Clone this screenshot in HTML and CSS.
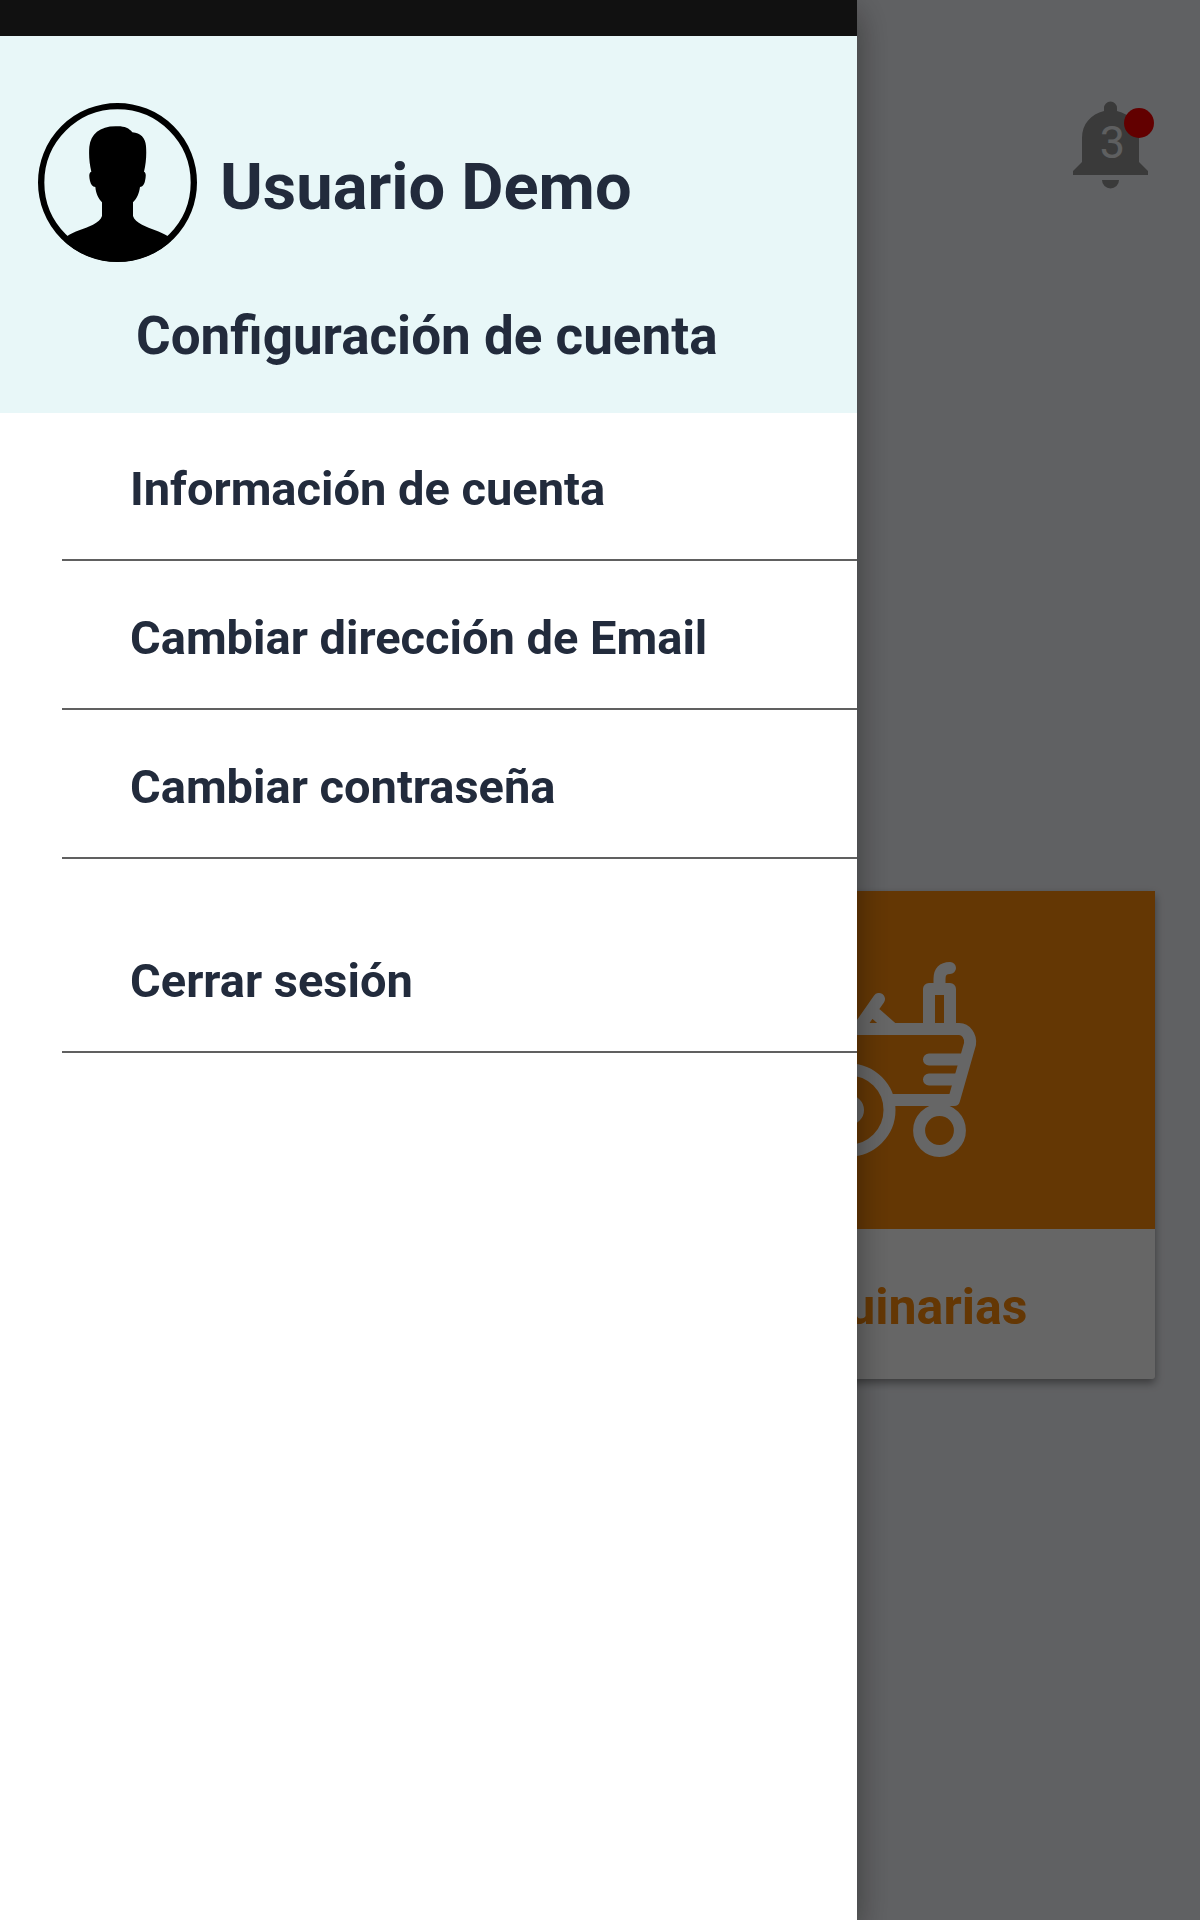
FILE: index.html
```html
<!DOCTYPE html>
<html lang="es">
<head>
<meta charset="utf-8">
<meta name="viewport" content="width=device-width, initial-scale=1">
<title>Configuración de cuenta</title>
<link rel="stylesheet" href="styles.css">
</head>
<body>
<div class="page">
  <header class="topbar">
    <button class="bell" type="button" aria-label="Notificaciones">
      <svg class="bell-icon" viewBox="0 0 75 88" aria-hidden="true">
        <path d="M31 10V7a6.500 6.500 0 0 1 13 0v3C57 13 66 23 66 37V61L75 70V74H0V70L9 61V37C9 23 18 13 31 10Z"/>
        <path d="M29 79H46A8.500 8.500 0 0 1 29 79Z"/>
      </svg>
      <span class="bell-count">3</span>
      <span class="bell-dot"></span>
    </button>
  </header>
  <main class="tiles">
    <a class="tile" href="#maquinarias">
      <span class="tile-art">
        <svg class="tractor" viewBox="790 962 196 196" aria-hidden="true">
          <circle cx="849" cy="1110" r="40.500"/>
          <circle cx="849" cy="1110" r="9"/>
          <circle cx="939.500" cy="1130.500" r="20.400"/>
          <path d="M825 1029H959A11 13 0 0 1 970 1044L954 1100H893"/>
          <path d="M929 1059.500H964M929 1079.500H958"/>
          <path d="M929 1029V989H950V1029"/>
          <path d="M939.500 989V979Q939.500 968 950 968"/>
          <path d="M879 999L858 1029M876 1014L893 1029"/>
        </svg>
      </span>
      <span class="tile-label">Maquinarias</span>
    </a>
  </main>
</div>
<div class="scrim"></div>
<aside class="drawer">
  <div class="statusbar"></div>
  <header class="account">
    <div class="profile">
      <svg class="avatar" viewBox="114 309 477 477" aria-hidden="true">
        <clipPath id="disc"><circle cx="352.500" cy="547.500" r="238"/></clipPath>
        <circle cx="352.500" cy="547.500" r="229" fill="none" stroke="#000" stroke-width="19"/>
        <path clip-path="url(#disc)" d="M350 379C372 378 387 384 397 397C422 399 436 414 438 438C440 465 438 490 432 515C439 518 438 530 435 543C432 555 428 560 420 561C417 582 411 595 399 607V648C402 658 412 667 426 674C452 687 480 693 504 709L560 800H140L201 709C222 693 252 687 279 674C293 667 303 658 306 648V607C295 595 288 582 286 561C277 560 273 554 270 543C267 530 266 518 274 515C268 490 266 465 268 440C272 402 300 378 350 379Z"/>
      </svg>
      <h1 class="name">Usuario Demo</h1>
    </div>
    <h2 class="section">Configuración de cuenta</h2>
  </header>
  <nav>
    <ul class="menu">
      <li><a class="item" href="#informacion">Información de cuenta</a></li>
      <li><a class="item" href="#email">Cambiar dirección de Email</a></li>
      <li><a class="item" href="#contrasena">Cambiar contraseña</a></li>
      <li class="apart"><a class="item" href="#salir">Cerrar sesión</a></li>
    </ul>
  </nav>
</aside>
</body>
</html>
```
FILE: styles.css
```css
* {
  box-sizing: border-box;
}

body {
  margin: 0;
  background: #f0f2f7;
  color: #222b3c;
  font-family: Roboto, "Liberation Sans", sans-serif;
}

h1,
h2,
ul {
  margin: 0;
  padding: 0;
}

a {
  color: inherit;
  text-decoration: none;
}

.page {
  min-height: 100vh;
}

.topbar {
  display: flex;
  justify-content: flex-end;
  padding: 101px 52px 0;
}

.bell {
  position: relative;
  display: flex;
  padding: 0;
  border: 0;
  background: none;
  font: inherit;
}

.bell-icon {
  width: 75px;
  height: 88px;
  fill: #919191;
}

.bell-count {
  position: absolute;
  inset: 16px 0 auto 4px;
  color: #ebedf0;
  font-size: 45px;
  line-height: 52px;
  text-align: center;
}

.bell-dot {
  position: absolute;
  top: 7px;
  right: -6px;
  width: 30px;
  height: 30px;
  border-radius: 50%;
  background: #f50000;
}

.tiles {
  display: grid;
  grid-template-columns: 1fr 1fr;
  gap: 42px;
  padding: 702px 45px 48px;
}

.tile {
  grid-column: 2;
  display: flex;
  flex-direction: column;
  border-radius: 3px;
  background: #fff;
  box-shadow: 0 4px 8px rgba(0, 0, 0, 0.4);
}

.tile-art {
  display: flex;
  justify-content: center;
  padding: 71px 0;
  background: #fa8a0c;
}

.tractor {
  width: 196px;
  height: 196px;
  fill: none;
  stroke: #fff;
  stroke-width: 12;
  stroke-linecap: round;
  stroke-linejoin: round;
}

.tile-label {
  padding: 48px 0 42px;
  color: #fa8a0c;
  font-size: 50px;
  font-weight: 700;
  line-height: 60px;
  text-align: center;
}

.scrim {
  position: fixed;
  inset: 0;
  background: rgba(0, 0, 0, 0.6);
}

.drawer {
  position: fixed;
  inset: 0 auto 0 0;
  width: 71.42%;
  background: #fff;
  box-shadow: 0 12px 32px rgba(0, 0, 0, 0.4);
}

.statusbar {
  height: 36px;
  background: #111;
}

.account {
  padding: 67px 38px 45px;
  background: #e8f7f8;
}

.profile {
  display: flex;
  align-items: center;
  gap: 23px;
}

.avatar {
  flex: none;
  width: 159px;
  height: 159px;
}

.name {
  padding-top: 8px;
  font-size: 65px;
  line-height: 76px;
}

.section {
  margin-top: 42px;
  padding-left: 98px;
  font-size: 53px;
  line-height: 64px;
}

.menu {
  display: flex;
  flex-direction: column;
  gap: 1px;
  padding-left: 62px;
  list-style: none;
}

.item {
  display: block;
  padding: 48px 0 42px 68px;
  border-bottom: 2px solid #606060;
  font-size: 47px;
  font-weight: 700;
  line-height: 56px;
}

.apart {
  margin-top: 45px;
}
```
